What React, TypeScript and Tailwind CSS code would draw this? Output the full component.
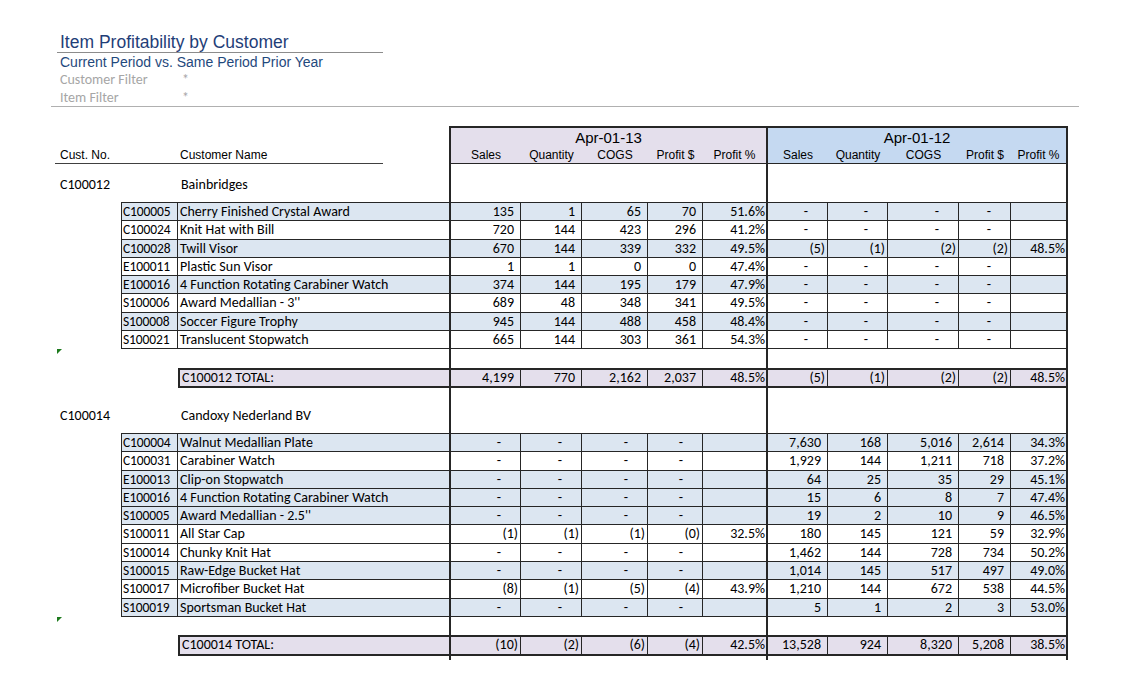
const B1 = ['w-[72px] border-l-2 border-r', 'w-[61px] border-r', 'w-[66px] border-r', 'w-[55px] border-r', 'w-[63px]'];
const B2 = ['w-[62px] border-l-2 border-r', 'w-[60px] border-r', 'w-[71px] border-r', 'w-[52px] border-r', 'w-[57px] border-r-2'];
const H1 = ['w-[70px]', 'w-[61px]', 'w-[66px]', 'w-[55px]', 'w-[63px]'];
const H2 = ['w-[60px]', 'w-[60px]', 'w-[71px]', 'w-[52px]', 'w-[55px]'];
const LABELS = ['Sales', 'Quantity', 'COGS', 'Profit $', 'Profit %'];

const D = ['-', '-', '-', '-', ''];

type Item = { id: string; name: string; cur: string[]; prior: string[]; blue: boolean };

const groups: {
  no: string;
  name: string;
  items: Item[];
  total: { cur: string[]; prior: string[] };
}[] = [
  {
    no: 'C100012',
    name: 'Bainbridges',
    items: [
      { id: 'C100005', name: 'Cherry Finished Crystal Award', cur: ['135', '1', '65', '70', '51.6%'], prior: D, blue: true },
      { id: 'C100024', name: 'Knit Hat with Bill', cur: ['720', '144', '423', '296', '41.2%'], prior: D, blue: false },
      { id: 'C100028', name: 'Twill Visor', cur: ['670', '144', '339', '332', '49.5%'], prior: ['(5)', '(1)', '(2)', '(2)', '48.5%'], blue: true },
      { id: 'E100011', name: 'Plastic Sun Visor', cur: ['1', '1', '0', '0', '47.4%'], prior: D, blue: false },
      { id: 'E100016', name: '4 Function Rotating Carabiner Watch', cur: ['374', '144', '195', '179', '47.9%'], prior: D, blue: true },
      { id: 'S100006', name: "Award Medallian - 3''", cur: ['689', '48', '348', '341', '49.5%'], prior: D, blue: false },
      { id: 'S100008', name: 'Soccer Figure Trophy', cur: ['945', '144', '488', '458', '48.4%'], prior: D, blue: true },
      { id: 'S100021', name: 'Translucent Stopwatch', cur: ['665', '144', '303', '361', '54.3%'], prior: D, blue: false },
    ],
    total: { cur: ['4,199', '770', '2,162', '2,037', '48.5%'], prior: ['(5)', '(1)', '(2)', '(2)', '48.5%'] },
  },
  {
    no: 'C100014',
    name: 'Candoxy Nederland BV',
    items: [
      { id: 'C100004', name: 'Walnut Medallian Plate', cur: D, prior: ['7,630', '168', '5,016', '2,614', '34.3%'], blue: true },
      { id: 'C100031', name: 'Carabiner Watch', cur: D, prior: ['1,929', '144', '1,211', '718', '37.2%'], blue: false },
      { id: 'E100013', name: 'Clip-on Stopwatch', cur: D, prior: ['64', '25', '35', '29', '45.1%'], blue: true },
      { id: 'E100016', name: '4 Function Rotating Carabiner Watch', cur: D, prior: ['15', '6', '8', '7', '47.4%'], blue: true },
      { id: 'S100005', name: "Award Medallian - 2.5''", cur: D, prior: ['19', '2', '10', '9', '46.5%'], blue: true },
      { id: 'S100011', name: 'All Star Cap', cur: ['(1)', '(1)', '(1)', '(0)', '32.5%'], prior: ['180', '145', '121', '59', '32.9%'], blue: false },
      { id: 'S100014', name: 'Chunky Knit Hat', cur: D, prior: ['1,462', '144', '728', '734', '50.2%'], blue: false },
      { id: 'S100015', name: 'Raw-Edge Bucket Hat', cur: D, prior: ['1,014', '145', '517', '497', '49.0%'], blue: true },
      { id: 'S100017', name: 'Microfiber Bucket Hat', cur: ['(8)', '(1)', '(5)', '(4)', '43.9%'], prior: ['1,210', '144', '672', '538', '44.5%'], blue: false },
      { id: 'S100019', name: 'Sportsman Bucket Hat', cur: D, prior: ['5', '1', '2', '3', '53.0%'], blue: true },
    ],
    total: { cur: ['(10)', '(2)', '(6)', '(4)', '42.5%'], prior: ['13,528', '924', '8,320', '5,208', '38.5%'] },
  },
];

function pad(v: string) {
  if (v === '-') return 'pr-[19px]';
  if (v.startsWith('(')) return 'pr-[2px]';
  if (v.endsWith('%')) return 'pr-[1px]';
  return 'pr-[6px]';
}

function Cells({ values, widths }: { values: string[]; widths: string[] }) {
  return (
    <>
      {values.map((v, i) => (
        <div key={i} className={`${widths[i]} ${pad(v)} shrink-0 border-[#262626] text-right`}>
          {v}
        </div>
      ))}
    </>
  );
}

function BlankRow({ h, flag }: { h: string; flag?: boolean }) {
  return (
    <div className={`flex ${h}`}>
      <div className="w-[449px] shrink-0">
        {flag && <div className="ml-[57px] h-0 w-0 border-t-[5px] border-r-[5px] border-t-[#1d7a1d] border-r-transparent" />}
      </div>
      <div className="w-[317px] shrink-0 border-l-2 border-[#262626]" />
      <div className="w-[302px] shrink-0 border-x-2 border-[#262626]" />
    </div>
  );
}

function CustomerRow({ no, name, h }: { no: string; name: string; h: string }) {
  return (
    <div className={`flex ${h}`}>
      <div className="flex w-[449px] shrink-0 items-end pb-[8px] leading-[18px]">
        <div className="w-[178px] pl-[60px]">{no}</div>
        <div className="pl-[3px]">{name}</div>
      </div>
      <div className="w-[317px] shrink-0 border-l-2 border-[#262626]" />
      <div className="w-[302px] shrink-0 border-x-2 border-[#262626]" />
    </div>
  );
}

export default function App() {
  return (
    <div className="h-[687px] w-[1140px] overflow-hidden bg-white text-black">
      {/* Title */}
      <div className="ml-[57px] w-[326px] border-b-[1.5px] border-[#8c8c8c] pt-[32px] pl-[3px] font-['Liberation_Sans',Arial,sans-serif] text-[17.5px] leading-[20px] text-[#1f3e78]">
        Item Profitability by Customer
      </div>
      <div className="ml-[51px] w-[1028px] border-b border-[#b0b0b0] pl-[9px]">
        <div className="pt-[1px] font-['Liberation_Sans',Arial,sans-serif] text-[14px] leading-[17px] text-[#1f497d]">
          Current Period vs. Same Period Prior Year
        </div>
        <div className="flex font-['Carlito','Lato',sans-serif] text-[14px] leading-[18px] text-[#a6a6a6]">
          <div className="w-[122px]">Customer Filter</div>
          <div>*</div>
        </div>
        <div className="flex font-['Carlito','Lato',sans-serif] text-[14px] leading-[17px] text-[#a6a6a6]">
          <div className="w-[122px]">Item Filter</div>
          <div>*</div>
        </div>
      </div>

      <div className="mt-[19px] font-['Carlito','Lato',sans-serif] text-[14px]">
        {/* Header */}
        <div className="flex items-end font-['Liberation_Sans',Arial,sans-serif]">
          <div className="ml-[55px] flex w-[328px] shrink-0 border-b border-[#404040] pl-[5px] text-[12px] leading-[16px]">
            <div className="w-[120px]">Cust. No.</div>
            <div>Customer Name</div>
          </div>
          <div className="w-[66px] shrink-0" />
          <div className="w-[317px] shrink-0 border-t-2 border-b border-l-2 border-[#262626] bg-[#e4dfec]">
            <div className="text-center text-[15px] leading-[19px]">Apr-01-13</div>
            <div className="flex text-[12px] leading-[16px]">
              {LABELS.map((l, i) => (
                <div key={l} className={`${H1[i]} shrink-0 text-center`}>{l}</div>
              ))}
            </div>
          </div>
          <div className="w-[302px] shrink-0 border-x-2 border-t-2 border-b border-[#262626] bg-[#c5d9f1]">
            <div className="text-center text-[15px] leading-[19px]">Apr-01-12</div>
            <div className="flex text-[12px] leading-[16px]">
              {LABELS.map((l, i) => (
                <div key={l} className={`${H2[i]} shrink-0 text-center`}>{l}</div>
              ))}
            </div>
          </div>
        </div>

        {groups.map((g, gi) => (
          <div key={g.no}>
            <CustomerRow no={g.no} name={g.name} h={gi === 0 ? 'h-[38px]' : 'h-[45px]'} />
            <div className="ml-[121px] w-[947px] border-t border-[#262626]">
              {g.items.map((it) => (
                <div
                  key={it.id + it.name}
                  className={`flex h-[18.3px] border-b border-[#262626] leading-[17px] ${it.blue ? 'bg-[#dce6f1]' : 'bg-white'}`}
                >
                  <div className="w-[57px] shrink-0 border-x border-[#262626] pl-[1px] text-[13.5px] tracking-[-0.1px]">{it.id}</div>
                  <div className="w-[271px] shrink-0 pl-[2px]">{it.name}</div>
                  <Cells values={it.cur} widths={B1} />
                  <Cells values={it.prior} widths={B2} />
                </div>
              ))}
            </div>
            <BlankRow h="h-[18.3px]" flag />
            <div className="flex">
              <div className="w-[178px] shrink-0" />
              <div className="flex h-[20.3px] border-y-2 border-[#262626] bg-[#e4dfec] leading-[16px]">
                <div className="w-[271px] shrink-0 border-l-2 border-[#262626] pl-[2px]">{g.no} TOTAL:</div>
                <Cells values={g.total.cur} widths={B1} />
                <Cells values={g.total.prior} widths={B2} />
              </div>
            </div>
          </div>
        ))}
        <BlankRow h="h-[4px]" />
      </div>
    </div>
  );
}
